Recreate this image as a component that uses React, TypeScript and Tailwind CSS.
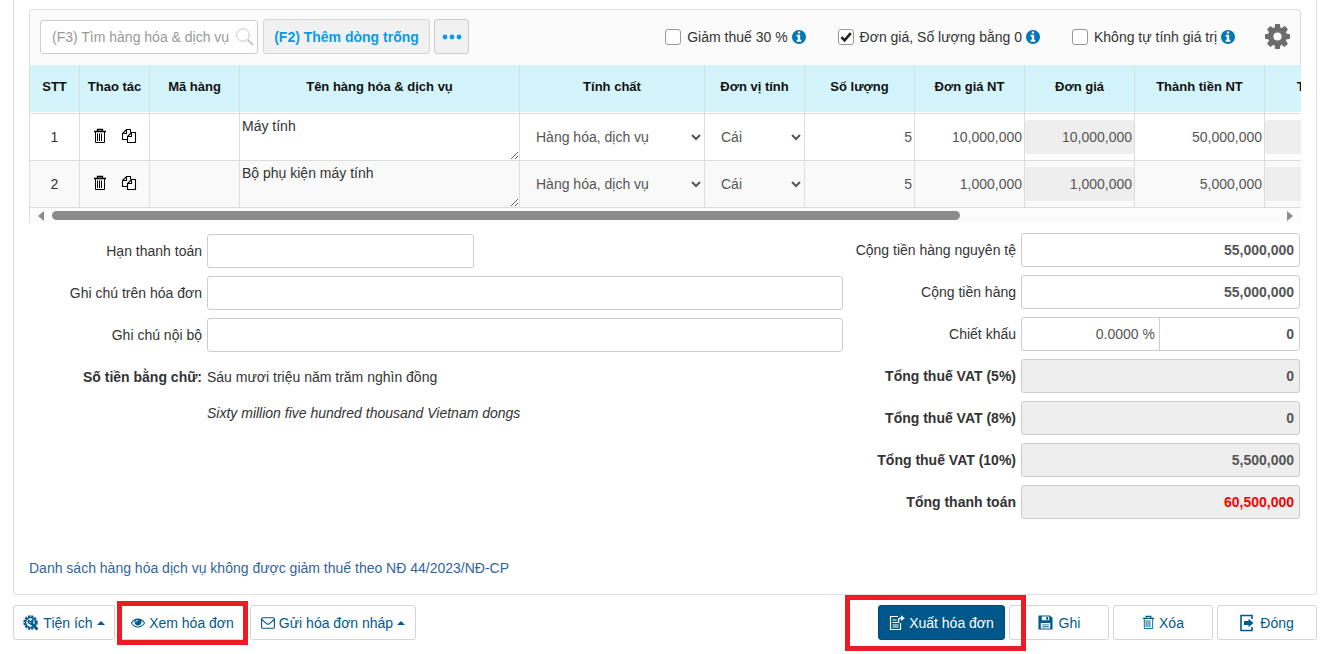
import { useState } from 'react'
import type { ReactNode } from 'react'

const columns = [
  { title: 'STT', width: 'w-[50px]' },
  { title: 'Thao tác', width: 'w-[70px]' },
  { title: 'Mã hàng', width: 'w-[90px]' },
  { title: 'Tên hàng hóa & dịch vụ', width: 'w-[280px]' },
  { title: 'Tính chất', width: 'w-[185px]' },
  { title: 'Đơn vị tính', width: 'w-[100px]' },
  { title: 'Số lượng', width: 'w-[110px]' },
  { title: 'Đơn giá NT', width: 'w-[110px]' },
  { title: 'Đơn giá', width: 'w-[110px]' },
  { title: 'Thành tiền NT', width: 'w-[130px]' },
  { title: 'Thành tiền', width: 'w-[130px]' }
]

const items = [
  { name: 'Máy tính', quantity: '5', price: '10,000,000', amount: '50,000,000' },
  { name: 'Bộ phụ kiện máy tính', quantity: '5', price: '1,000,000', amount: '5,000,000' }
]

const options = [
  { id: 'reduce', label: 'Giảm thuế 30 %', checked: false },
  { id: 'zero', label: 'Đơn giá, Số lượng bằng 0', checked: true },
  { id: 'manual', label: 'Không tự tính giá trị', checked: false }
]

const taxes = [
  { id: 'vat5', label: 'Tổng thuế VAT (5%)', value: '0' },
  { id: 'vat8', label: 'Tổng thuế VAT (8%)', value: '0' },
  { id: 'vat10', label: 'Tổng thuế VAT (10%)', value: '5,500,000' }
]

export default function App() {
  return (
    <main className="pl-[13px] pr-[14px] pb-3 bg-white font-['Liberation_Sans',Arial,sans-serif] text-sm text-[#333]">
      <section className="border-x border-b border-[#e2dde0] rounded-b px-[15px] pt-[9px] pb-4">
        <Toolbar />
        <ItemTable />

        {/* Notes and totals */}
        <div className="flex pt-[10px] pr-px">
          <Notes />
          <Totals />
        </div>

        <a href="#nd44" className="inline-block mt-[39px] leading-5 text-[#31659c]">
          Danh sách hàng hóa dịch vụ không được giảm thuế theo NĐ 44/2023/NĐ-CP
        </a>
      </section>

      <Footer />
    </main>
  )
}

function Toolbar() {
  return (
    <div className="flex items-center h-14 px-[10px] pb-[2px] border border-b-0 border-[#ddd] rounded-t bg-[#fbfbfb]">
      <div className="relative">
        <input
          type="text"
          aria-label="Tìm hàng hóa & dịch vụ"
          placeholder="(F3) Tìm hàng hóa & dịch vụ"
          className="block w-[218px] h-[34px] pl-[11px] pr-6 border border-[#ccc] rounded-[3px] bg-white placeholder:text-[#999] outline-none"
        />
        <svg viewBox="0 0 18 18" className="absolute right-1 top-2 w-[18px] h-[18px]" fill="none" stroke="#c6c6c6">
          <circle cx="7" cy="7" r="6.3" strokeWidth="1" />
          <path d="M11.8 11.8 17 17" strokeWidth="1.8" />
        </svg>
      </div>
      <button type="button" className="ml-[5px] w-[167px] h-[35px] border border-[#d5d5d5] rounded-[3px] bg-[#f1f1f1] font-bold text-[#0a9be6]">
        (F2) Thêm dòng trống
      </button>
      <button type="button" aria-label="Thêm" className="ml-1 w-[35px] h-[35px] flex items-center justify-center border border-[#ccc] rounded-[3px] bg-[#f1f1f1]">
        <svg viewBox="0 0 20 6" className="w-5 h-[6px]" fill="#0a9be6">
          <circle cx="3" cy="3" r="2.4" />
          <circle cx="10" cy="3" r="2.4" />
          <circle cx="17" cy="3" r="2.4" />
        </svg>
      </button>

      <div className="ml-auto flex items-center gap-8">
        {options.map((option) => (
          <CheckOption key={option.id} {...option} />
        ))}
      </div>
      <button type="button" aria-label="Cài đặt" className="ml-[30px]">
        <GearIcon />
      </button>
    </div>
  )
}

interface CheckOptionProps {
  id: string
  label: string
  checked: boolean
}

function CheckOption({ id, label, checked }: CheckOptionProps) {
  const [on, setOn] = useState(checked)

  return (
    <div className="flex items-center">
      <span className="relative">
        <input
          id={id}
          type="checkbox"
          checked={on}
          onChange={() => setOn(!on)}
          className="block w-4 h-4 appearance-none border border-[#999] rounded-[3px] bg-white"
        />
        {on && (
          <svg viewBox="0 0 16 16" className="absolute inset-0 w-4 h-4 pointer-events-none" fill="none" stroke="#222" strokeWidth="2.6">
            <path d="M3.4 8.2 6.6 11.4 12.8 4.2" />
          </svg>
        )}
      </span>
      <label htmlFor={id} className="ml-[6px]">{label}</label>
      <InfoIcon />
    </div>
  )
}

function ItemTable() {
  const cell = 'p-0 border-r border-b border-[#ddd]'
  const field = 'block w-full h-[34px] pr-[2px] text-right text-[#555] outline-none'

  return (
    <div className="border-l border-[#ddd] bg-[#fcfcfc]">
      <div className="overflow-hidden">
        <table className="table-fixed w-[1365px] border-separate border-spacing-0">
          <thead>
            <tr>
              {columns.map((column) => (
                <th key={column.title} scope="col" className={`${column.width} p-0 pb-px border-r border-b border-[#ddd] bg-white`}>
                  <div className="h-[47px] pb-[3px] flex items-center justify-center bg-[#d4f4fc] text-[13px] font-bold text-[#111]">
                    {column.title}
                  </div>
                </th>
              ))}
            </tr>
          </thead>
          <tbody>
            {items.map((item, index) => (
              <tr key={item.name} className="h-[47px] bg-white even:bg-[#f9f9f9]">
                <td className={`${cell} text-center`}>{index + 1}</td>
                <td className={cell}>
                  <div className="flex items-center justify-center gap-[14px] pb-[3px]">
                    <button type="button" aria-label="Xóa dòng"><TrashIcon className="w-[14px] h-4 text-black" /></button>
                    <button type="button" aria-label="Sao chép dòng"><CopyIcon /></button>
                  </div>
                </td>
                <td className={cell}>
                  <input type="text" aria-label="Mã hàng" className="block w-full h-[34px] outline-none" />
                </td>
                <td className={cell}>
                  <textarea aria-label="Tên hàng" defaultValue={item.name} className="block w-full h-[46px] px-[2px] py-[2px] leading-5 outline-none resize" />
                </td>
                <td className={cell}>
                  <select aria-label="Tính chất" className="block w-full h-[34px] pl-3 bg-transparent text-[#555] outline-none">
                    <option>Hàng hóa, dịch vụ</option>
                  </select>
                </td>
                <td className={cell}>
                  <select aria-label="Đơn vị tính" className="block w-full h-[34px] pl-3 bg-transparent text-[#555] outline-none">
                    <option>Cái</option>
                  </select>
                </td>
                <td className={cell}>
                  <input type="text" aria-label="Số lượng" defaultValue={item.quantity} className={field} />
                </td>
                <td className={cell}>
                  <input type="text" aria-label="Đơn giá NT" defaultValue={item.price} className={field} />
                </td>
                <td className={cell}>
                  <input type="text" readOnly aria-label="Đơn giá" value={item.price} className={`${field} rounded-[3px] bg-[#eee]`} />
                </td>
                <td className={cell}>
                  <input type="text" aria-label="Thành tiền NT" defaultValue={item.amount} className={field} />
                </td>
                <td className={cell}>
                  <input type="text" readOnly aria-label="Thành tiền" value={item.amount} className={`${field} rounded-[3px] bg-[#eee]`} />
                </td>
              </tr>
            ))}
          </tbody>
        </table>
      </div>

      {/* Horizontal scroll track */}
      <div className="flex items-center gap-2 h-[15px] px-2">
        <svg viewBox="0 0 6 10" className="w-[6px] h-[10px]" fill="#8b8b8b"><path d="M6 0v10L0 5z" /></svg>
        <div className="flex-1">
          <div className="w-[74%] h-[9px] rounded-full bg-[#8b8b8b]" />
        </div>
        <svg viewBox="0 0 6 10" className="w-[6px] h-[10px]" fill="#8b8b8b"><path d="M0 0v10l6-5z" /></svg>
      </div>
    </div>
  )
}

function Notes() {
  const box = 'h-[34px] px-3 border border-[#ccc] rounded-[3px] outline-none'

  return (
    <div className="flex-1 grid grid-cols-[173px_1fr] gap-x-[5px] gap-y-2 items-center content-start pt-px">
      <label htmlFor="due" className="text-right">Hạn thanh toán</label>
      <input id="due" type="text" className={`${box} w-[267px]`} />
      <label htmlFor="note" className="text-right">Ghi chú trên hóa đơn</label>
      <input id="note" type="text" className={box} />
      <label htmlFor="internal" className="text-right">Ghi chú nội bộ</label>
      <input id="internal" type="text" className={box} />
      <p className="text-right font-bold leading-[34px]">Số tiền bằng chữ:</p>
      <p>Sáu mươi triệu năm trăm nghìn đồng</p>
      <p className="col-start-2 italic leading-[22px]">Sixty million five hundred thousand Vietnam dongs</p>
    </div>
  )
}

function Totals() {
  const box = 'w-[279px] h-[34px] px-[5px] border border-[#ccc] rounded-[3px] text-right font-bold outline-none'

  return (
    <div className="w-[457px] grid grid-cols-[1fr_279px] gap-x-[5px] gap-y-2 items-center">
      <label htmlFor="sum-nt" className="text-right">Cộng tiền hàng nguyên tệ</label>
      <input id="sum-nt" type="text" defaultValue="55,000,000" className={`${box} text-[#555]`} />
      <label htmlFor="sum" className="text-right">Cộng tiền hàng</label>
      <input id="sum" type="text" defaultValue="55,000,000" className={`${box} text-[#555]`} />
      <label htmlFor="discount" className="text-right">Chiết khấu</label>
      <div className="flex h-[34px] border border-[#ccc] rounded-[3px] text-[#555]">
        <input id="discount" type="text" defaultValue="0.0000 %" className="w-[138px] pr-1 border-r border-[#ccc] text-right outline-none" />
        <input type="text" aria-label="Tiền chiết khấu" defaultValue="0" className="flex-1 min-w-0 pr-[5px] text-right font-bold outline-none" />
      </div>
      {taxes.map((tax) => (
        <div key={tax.id} className="contents">
          <label htmlFor={tax.id} className="text-right font-bold">{tax.label}</label>
          <input id={tax.id} type="text" readOnly value={tax.value} className={`${box} bg-[#eee] text-[#555]`} />
        </div>
      ))}
      <label htmlFor="total" className="text-right font-bold">Tổng thanh toán</label>
      <input id="total" type="text" readOnly value="60,500,000" className={`${box} bg-[#eee] text-[#f00]`} />
    </div>
  )
}

function Footer() {
  return (
    <footer className="flex items-center gap-1 pt-[10px]">
      <FooterButton width="w-[102px]"><ToolIcon />Tiện ích<Caret /></FooterButton>
      <div className="relative">
        <FooterButton width="w-[127px]"><EyeIcon />Xem hóa đơn</FooterButton>
        <div className="absolute -inset-x-[2px] -top-1 -bottom-[5px] border-5 border-[#ed1c24] pointer-events-none" />
      </div>
      <FooterButton width="w-[166px]"><MailIcon />Gửi hóa đơn nháp<Caret /></FooterButton>

      <div className="relative z-10 ml-auto">
        <button type="button" className="flex items-center justify-center gap-1 w-[127px] h-[35px] border border-[#004a78] rounded-[3px] bg-[#00588a] text-white">
          <ExportIcon />Xuất hóa đơn
        </button>
        <div className="absolute -left-[33px] -right-[21px] -top-[10px] -bottom-[11px] border-5 border-[#ed1c24] pointer-events-none" />
      </div>
      <FooterButton width="w-[100px]"><SaveIcon />Ghi</FooterButton>
      <FooterButton width="w-[100px]"><TrashIcon className="w-[13px] h-[15px]" />Xóa</FooterButton>
      <FooterButton width="w-[100px]"><ExitIcon />Đóng</FooterButton>
    </footer>
  )
}

function FooterButton({ width, children }: { width: string; children: ReactNode }) {
  return (
    <button type="button" className={`${width} h-[35px] flex items-center justify-center gap-1 border border-[#d5d5d5] rounded-[3px] bg-white text-[#005a8c] whitespace-nowrap`}>
      {children}
    </button>
  )
}

function Caret() {
  return (
    <svg viewBox="0 0 8 4" className="w-2 h-1" fill="currentColor"><path d="M4 0l4 4H0z" /></svg>
  )
}

function InfoIcon() {
  return (
    <svg viewBox="128 128 1536 1536" className="ml-1 w-[14px] h-[14px]" fill="#0277b5">
      <path d="M1152 1376v-160q0-14-9-23t-23-9h-96v-512q0-14-9-23t-23-9h-320q-14 0-23 9t-9 23v160q0 14 9 23t23 9h96v320h-96q-14 0-23 9t-9 23v160q0 14 9 23t23 9h448q14 0 23-9t9-23zm-128-896v-160q0-14-9-23t-23-9h-192q-14 0-23 9t-9 23v160q0 14 9 23t23 9h192q14 0 23-9t9-23zm640 416q0 209-103 385.500t-279.500 279.500-385.500 103-385.500-103-279.500-279.500-103-385.500 103-385.500 279.500-279.500 385.500-103 385.500 103 279.500 279.500 103 385.500z" />
    </svg>
  )
}

function EyeIcon() {
  return (
    <svg viewBox="0 64 1792 1792" className="w-[14px] h-[14px]" fill="currentColor">
      <path d="M1664 960q-152-236-381-353 61 104 61 225 0 185-131.500 316.500t-316.500 131.500-316.500-131.500-131.500-316.500q0-121 61-225-229 117-381 353 133 205 333.500 326.500t434.500 121.500 434.500-121.500 333.500-326.500zm-720-384q0-20-14-34t-34-14q-125 0-214.500 89.500t-89.500 214.500q0 20 14 34t34 14 34-14 14-34q0-86 61-147t147-61q20 0 34-14t14-34zm848 384q0 34-20 69-140 230-376.500 368.500t-499.500 138.500-499.500-139-376.500-368q-20-35-20-69t20-69q140-229 376.500-368t499.500-139 499.500 139 376.500 368q20 35 20 69z" />
    </svg>
  )
}

function GearIcon() {
  return (
    <svg viewBox="0 0 24 24" className="w-[25px] h-[25px]" fill="#6d6d6d">
      {[0, 45, 90, 135].map((angle) => (
        <path key={angle} d="M9.8 0h4.4l.9 5v14l-.9 5H9.8l-.9-5V5z" transform={`rotate(${angle} 12 12)`} />
      ))}
      <circle cx="12" cy="12" r="9" />
      <circle cx="12" cy="12" r="3.9" fill="#fbfbfb" />
    </svg>
  )
}

function TrashIcon({ className }: { className: string }) {
  return (
    <svg viewBox="0 0 14 16" className={className} fill="none" stroke="currentColor">
      <path d="M4.500 3V1.500h5V3M1 3.500h12" strokeWidth="1.300" />
      <path d="M2.500 4v10.500h9V4M4.500 5.500v7.500M6.500 5.500v7.500M8.500 5.500v7.500" />
    </svg>
  )
}

function CopyIcon() {
  return (
    <svg viewBox="0 0 16 16" className="w-4 h-4" fill="none" stroke="#000" strokeWidth="1.1">
      <path d="M6.500 11.500h-5V5.500l4-4h4V4.500M5.500 1.500v4h-4" />
      <path d="M10.500 4.500h4v10h-8v-6zM10.500 4.500v4h-4" />
    </svg>
  )
}

function ToolIcon() {
  return (
    <svg viewBox="0 0 16 16" className="w-4 h-4" fill="none" stroke="currentColor">
      <circle cx="7.500" cy="7.500" r="6.300" strokeWidth="1.800" strokeDasharray="2.300 1" />
      <circle cx="7.500" cy="7.500" r="5" strokeWidth="1.600" />
      <path d="M8 8l6.500 6.500" strokeWidth="2.600" />
      <path d="M5.500 5.200a2.400 2.400 0 1 0 4-.4L8 7z" strokeWidth="1.400" />
    </svg>
  )
}

function MailIcon() {
  return (
    <svg viewBox="0 0 14 12" className="w-[14px] h-3" fill="none" stroke="currentColor" strokeWidth="1.100">
      <rect x=".6" y=".8" width="12.800" height="10.400" rx="1" />
      <path d="M.8 2.500 5.800 6.800q1.200.9 2.400 0L13.200 2.500" />
    </svg>
  )
}

function ExportIcon() {
  return (
    <svg viewBox="0 0 16 16" className="w-4 h-4" fill="none" stroke="currentColor" strokeWidth="1.200">
      <path d="M9 1.500H1.500v13h10V8" />
      <path d="M3.500 5h4M3.500 7.500h5.500M3.500 10h6M3.500 12h6" strokeWidth="1" />
      <path d="M9.500 8V5q0-1.800 2-1.800H13" strokeWidth="1.400" />
      <path d="M12 .3 15.800 3.200 12 6z" fill="currentColor" stroke="none" />
    </svg>
  )
}

function SaveIcon() {
  return (
    <svg viewBox="0 0 16 16" className="mr-[2px] w-[15px] h-[15px]" fill="currentColor">
      <path fillRule="evenodd" d="M1 .5h11.500L15.500 3v12.500h-15V1zM4 1.500v4.200h8V1.500zM3 8.500v6h10v-6z" />
      <path d="M8.800 2h2v3h-2zM4.500 10h7v1h-7zM4.500 12h7v1h-7z" />
    </svg>
  )
}

function ExitIcon() {
  return (
    <svg viewBox="1 0 14 18" className="mr-[2px] w-[14px] h-[18px]" fill="none" stroke="currentColor" strokeWidth="1.600">
      <path d="M13 5V1.500H2v15h11V13" />
      <path d="M5 7h4.500V4.800L14.500 9l-5 4.200V11H5z" fill="currentColor" stroke="none" />
    </svg>
  )
}
